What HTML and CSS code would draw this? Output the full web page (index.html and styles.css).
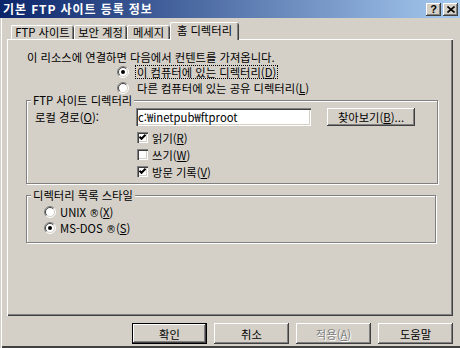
FILE: index.html
```html
<!DOCTYPE html>
<html lang="ko">
<head>
<meta charset="utf-8">
<title>기본 FTP 사이트 등록 정보</title>
<link rel="stylesheet" href="styles.css">
</head>
<body>
<div class="window">
  <div class="titlebar">
    <span class="title">기본 FTP 사이트 등록 정보</span>
    <div class="caption-btns">
      <span class="cbtn help">?</span>
      <span class="cbtn close"><svg width="8" height="7" viewBox="0 0 8 7"><path d="M0.5 0.5 L7.5 6.5 M7.5 0.5 L0.5 6.5" stroke="#000" stroke-width="1.6" fill="none"/></svg></span>
    </div>
  </div>

  <div class="tabs">
    <div class="tab t1">FTP 사이트</div>
    <div class="tab t2">보안 계정</div>
    <div class="tab t3">메세지</div>
    <div class="tab active">홈 디렉터리</div>
  </div>

  <div class="panel">
    <p class="intro">이 리소스에 연결하면 다음에서 컨텐트를 가져옵니다.</p>
    <div class="source-list">
      <div class="radio-row">
        <svg class="radio" width="12" height="12" viewBox="0 0 12 12"><circle cx="6" cy="6" r="5" fill="#fff"/><path d="M2.1 9.9 A5.5 5.5 0 0 1 9.9 2.1" stroke="#808080" fill="none"/><path d="M9.9 2.1 A5.5 5.5 0 0 1 2.1 9.9" stroke="#fff" fill="none"/><path d="M2.8 9.2 A4.5 4.5 0 0 1 9.2 2.8" stroke="#404040" fill="none"/><path d="M9.2 2.8 A4.5 4.5 0 0 1 2.8 9.2" stroke="#d4d0c8" fill="none"/><circle cx="6" cy="6" r="2" fill="#000"/></svg>
        <span class="focus">이 컴퓨터에 있는 디렉터리(<u>D</u>)</span>
      </div>
      <div class="radio-row">
        <svg class="radio" width="12" height="12" viewBox="0 0 12 12"><circle cx="6" cy="6" r="5" fill="#fff"/><path d="M2.1 9.9 A5.5 5.5 0 0 1 9.9 2.1" stroke="#808080" fill="none"/><path d="M9.9 2.1 A5.5 5.5 0 0 1 2.1 9.9" stroke="#fff" fill="none"/><path d="M2.8 9.2 A4.5 4.5 0 0 1 9.2 2.8" stroke="#404040" fill="none"/><path d="M9.2 2.8 A4.5 4.5 0 0 1 2.8 9.2" stroke="#d4d0c8" fill="none"/></svg>
        <span class="plain">다른 컴퓨터에 있는 공유 디렉터리(<u>L</u>)</span>
      </div>
    </div>

    <div class="group g1">
      <div class="group-title">FTP 사이트 디렉터리</div>
      <div class="path-row">
        <span class="path-label">로컬 경로(<u>O</u>):</span>
        <div class="textbox">c:₩inetpub₩ftproot</div>
        <div class="btn browse">찾아보기(<u>B</u>)...</div>
      </div>
      <div class="checks">
        <div class="check-row"><span class="checkbox"><svg width="11" height="11" viewBox="0 0 11 11"><path d="M2.5 4.8 L4.5 6.8 L8.5 2.8" stroke="#000" stroke-width="2" fill="none"/></svg></span><span>읽기(<u>R</u>)</span></div>
        <div class="check-row"><span class="checkbox"></span><span>쓰기(<u>W</u>)</span></div>
        <div class="check-row"><span class="checkbox"><svg width="11" height="11" viewBox="0 0 11 11"><path d="M2.5 4.8 L4.5 6.8 L8.5 2.8" stroke="#000" stroke-width="2" fill="none"/></svg></span><span>방문 기록(<u>V</u>)</span></div>
      </div>
    </div>

    <div class="group g2">
      <div class="group-title">디렉터리 목록 스타일</div>
      <div class="style-list">
        <div class="radio-row small">
          <svg class="radio" width="12" height="12" viewBox="0 0 12 12"><circle cx="6" cy="6" r="5" fill="#fff"/><path d="M2.1 9.9 A5.5 5.5 0 0 1 9.9 2.1" stroke="#808080" fill="none"/><path d="M9.9 2.1 A5.5 5.5 0 0 1 2.1 9.9" stroke="#fff" fill="none"/><path d="M2.8 9.2 A4.5 4.5 0 0 1 9.2 2.8" stroke="#404040" fill="none"/><path d="M9.2 2.8 A4.5 4.5 0 0 1 2.8 9.2" stroke="#d4d0c8" fill="none"/></svg>
          <span>UNIX <span class="reg">®</span>(<u>X</u>)</span>
        </div>
        <div class="radio-row small">
          <svg class="radio" width="12" height="12" viewBox="0 0 12 12"><circle cx="6" cy="6" r="5" fill="#fff"/><path d="M2.1 9.9 A5.5 5.5 0 0 1 9.9 2.1" stroke="#808080" fill="none"/><path d="M9.9 2.1 A5.5 5.5 0 0 1 2.1 9.9" stroke="#fff" fill="none"/><path d="M2.8 9.2 A4.5 4.5 0 0 1 9.2 2.8" stroke="#404040" fill="none"/><path d="M9.2 2.8 A4.5 4.5 0 0 1 2.8 9.2" stroke="#d4d0c8" fill="none"/><circle cx="6" cy="6" r="2" fill="#000"/></svg>
          <span>MS-DOS <span class="reg">®</span>(<u>S</u>)</span>
        </div>
      </div>
    </div>
  </div>

  <div class="buttons">
    <div class="btn dlg default">확인</div>
    <div class="btn dlg">취소</div>
    <div class="btn dlg disabled">적용(<u>A</u>)</div>
    <div class="btn dlg">도움말</div>
  </div>
</div>
</body>
</html>
```

FILE: styles.css
```css
* { box-sizing: border-box; }

body {
  margin: 0;
  background: #d4d0c8;
  font-family: "Noto Sans CJK KR", "Noto Sans", sans-serif;
  font-size: 11.3px;
  color: #000;
}

u { text-decoration: underline; text-underline-offset: 1px; }

.window {
  width: 460px;
  height: 348px;
  background: #d4d0c8;
  overflow: hidden;
  box-shadow: inset 1px 0 #d4d0c8, inset 2px 0 #fff, inset 0 -2px #404040;
  white-space: nowrap;
}

/* title bar */
.titlebar {
  height: 18px;
  display: flex;
  align-items: center;
  justify-content: space-between;
  padding: 0 2px 0 3px;
  background: linear-gradient(to right, #0a246a, #a6caf0);
}
.title {
  color: #fff;
  font-weight: bold;
  font-size: 12px;
  letter-spacing: 0.9px;
  line-height: 18px;
}
.caption-btns { display: flex; gap: 2px; }
.cbtn {
  width: 15px;
  height: 13px;
  background: #d4d0c8;
  display: flex;
  align-items: center;
  justify-content: center;
  box-shadow: inset -1px -1px #404040, inset 1px 1px #fff, inset -2px -2px #808080;
}
.cbtn.help {
  font: bold 11px/13px "Liberation Sans", sans-serif;
}

/* tabs */
.tabs {
  display: flex;
  align-items: flex-end;
  height: 21px;
  padding-left: 11px;
}
.tab {
  height: 14px;
  line-height: 14px;
  text-align: center;
  border-radius: 2px 2px 0 0;
  box-shadow: inset 1px 0 #fff, inset 0 1px #fff, inset -1px 0 #404040, inset -2px 0 #808080;
}
.t1 { width: 63px; }
.t2 { width: 53px; }
.t3 { width: 43px; }
.tab.active {
  width: 69px;
  height: 18px;
  line-height: 16px;
  margin-bottom: -1px;
  position: relative;
  z-index: 1;
  background: #d4d0c8;
}

/* panel */
.panel {
  margin: 0 7px;
  height: 277px;
  padding-top: 11px;
  box-shadow: inset 1px 1px #fff, inset -1px -1px #404040, inset -2px -2px #808080;
}
.intro {
  margin: 0 0 0 20px;
  line-height: 14px;
}
.source-list { margin-left: 110px; }
.radio-row {
  display: flex;
  align-items: center;
  height: 16px;
  gap: 6px;
}
.radio { flex: none; }
.focus {
  border: 1px dotted #000;
  padding: 0 1px;
  line-height: 12px;
}
.plain { padding: 0 2px; line-height: 12px; }

/* groups */
.group {
  margin-left: 19px;
  border: 1px solid #808080;
  box-shadow: inset 1px 1px #fff, 1px 1px #fff;
}
.group-title {
  width: max-content;
  height: 12px;
  line-height: 12px;
  margin: -7px 0 0 4px;
  padding: 0 2px;
  background: #d4d0c8;
}
.g1 {
  margin-top: 4px;
  width: 412px;
  height: 84px;
}
.g2 {
  margin-top: 11px;
  width: 410px;
  height: 48px;
}

.path-row {
  display: flex;
  align-items: center;
  height: 18px;
  margin: 2px 0 0 8px;
}
.path-label { width: 101px; }
.textbox {
  width: 175px;
  height: 18px;
  line-height: 18px;
  padding-left: 2px;
  background: #fff;
  box-shadow: inset 1px 1px #808080, inset 2px 2px #404040, inset -1px -1px #fff, inset -2px -2px #d4d0c8;
}
.btn {
  display: flex;
  align-items: center;
  justify-content: center;
  background: #d4d0c8;
  box-shadow: inset -1px -1px #404040, inset 1px 1px #fff, inset -2px -2px #808080;
}
.browse {
  margin-left: 16px;
  width: 88px;
  height: 18px;
}

.checks { margin: 3px 0 0 110px; }
.check-row {
  display: flex;
  align-items: center;
  height: 17px;
  gap: 4px;
}
.checkbox {
  width: 11px;
  height: 11px;
  flex: none;
  background: #fff;
  box-shadow: inset 1px 1px #808080, inset 2px 2px #404040, inset -1px -1px #fff, inset -2px -2px #d4d0c8;
}
.checkbox svg { display: block; }

.style-list { margin: 3px 0 0 17px; }
.radio-row.small { gap: 4px; }
.reg { font-family: "DejaVu Sans", sans-serif; font-size: 10px; }

/* dialog buttons */
.buttons {
  display: flex;
  justify-content: flex-end;
  gap: 7px;
  margin-top: 7px;
  padding-right: 7px;
}
.dlg {
  width: 75px;
  height: 21px;
}
.dlg.default {
  box-shadow: inset 0 0 0 1px #000, inset -2px -2px #404040, inset 2px 2px #fff, inset -3px -3px #808080;
}
.dlg.disabled {
  color: #808080;
  text-shadow: 1px 1px #fff;
}
```
